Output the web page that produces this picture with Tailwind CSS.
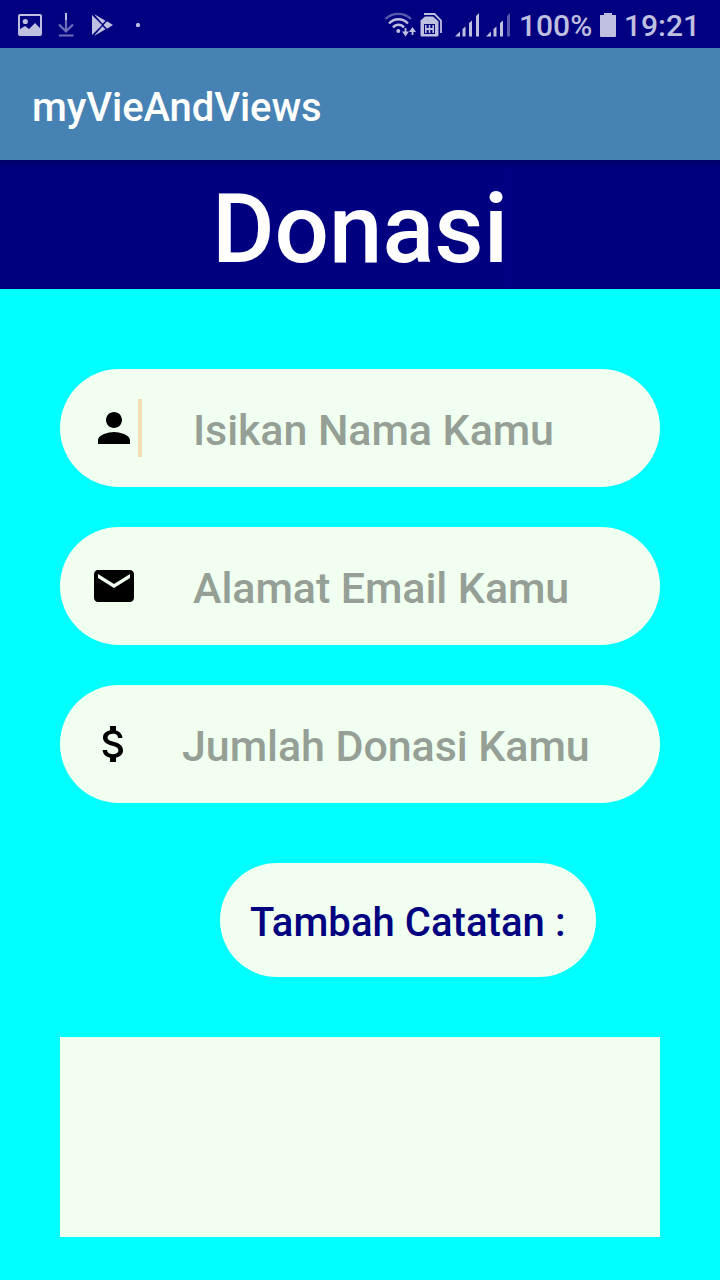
<!DOCTYPE html>
<html lang="id">
<head>
<meta charset="utf-8">
<title>myVieAndViews</title>
<script src="https://cdn.jsdelivr.net/npm/@tailwindcss/browser@4"></script>
</head>
<body class="w-[720px] h-[1280px] overflow-hidden bg-[#00ffff] font-['Roboto',sans-serif] font-medium flex flex-col">
  <!-- Status bar -->
  <header class="h-12 shrink-0 bg-[#000080] flex items-center justify-between text-[#bfbfdf]">
    <svg class="w-[160px] h-12" viewBox="0 0 160 48" fill="currentColor">
      <path fill-rule="evenodd" d="M20 14h20a2 2 0 0 1 2 2v18a2 2 0 0 1-2 2H20a2 2 0 0 1-2-2V16a2 2 0 0 1 2-2zM20 16v13l5-3 4 3 6-6 5 5V16z"/>
      <circle cx="25.300" cy="21.500" r="2.600"/>
      <path d="M66 20V32M59 24.500l7 7 7-7M59 35.500h14.500" fill="none" stroke="#6f6fb9" stroke-width="2.200"/>
      <path d="M65 13h2v7h-2z"/>
      <path d="M92 15v20l10-10zM94 14l8.500 9.700 3-3zM94 36l8.500-9.700 3 3zM103.500 25l3.500-3.700 6 3.700-6 3.700z"/>
      <rect x="136" y="23" width="4" height="4" rx="1.500"/>
    </svg>
    <div class="flex h-12 items-center">
      <svg class="w-[135px] h-12" viewBox="380 0 135 48" fill="currentColor">
        <g fill="none" stroke="currentColor" stroke-width="2.400">
          <path d="M385.500 19C392.500 12.200 404 12.200 411 19" stroke="#5858ad"/>
          <path d="M389 23.500C394 17.800 403 17.800 408 23.500"/>
          <path d="M393 27.500C396 23.800 401 23.800 404 27.500"/>
          <path d="M405.500 28v6M412.500 35v-6M424 14h10.500L441 20.500V33" stroke-width="1.800"/>
        </g>
        <path d="M402 31.500h7l-3.500 5zM409 32h7l-3.500-5z"/>
        <circle cx="398.300" cy="31" r="2"/>
        <path d="M425 16.500h8l5.500 5V35a1.500 1.500 0 0 1-1.500 1.500h-15A1.500 1.500 0 0 1 420.500 35V20.500z"/>
        <path d="M424 24h11v10h-11z" fill="#000080"/>
        <path d="M425 25h1.600v3h2.100v-3h1.600v3h2.100v-3h1.600v8h-1.600v-3h-2.100v3h-1.600v-3h-2.100v3H425z"/>
        <path d="M455 36.500l5-5v5zM462.500 29l3-2.500v10h-3zM469 23l3-2.500v16h-3zM476 16l3-3v23.500h-3zM486 36.500l5-5v5zM493.500 29l3-2.500v10h-3zM500 23l3-2.500v16h-3z"/>
        <path d="M507 16l3-3v23.500h-3z" fill="#5858ad"/>
      </svg>
      <span class="w-[85px] pl-1 text-[30px] leading-[30px] whitespace-nowrap pt-[3px]">100%</span>
      <svg class="w-[16px] h-12" viewBox="0 0 16 48" fill="currentColor"><path d="M4 13h8v2h3.500a.5.500 0 0 1 .5.500V36a1 1 0 0 1-1 1H1a1 1 0 0 1-1-1V15.500A.5.500 0 0 1 .5 15H4z"/></svg>
      <span class="w-[104px] pl-2 text-[30px] leading-[30px] whitespace-nowrap pt-[3px]">19:21</span>
    </div>
  </header>

  <!-- App bar -->
  <div class="h-28 shrink-0 bg-[#4682b4] text-white text-[40px] leading-[47px] tracking-[-0.08px] px-8 flex items-center pt-1.5">myVieAndViews</div>

  <h1 class="h-[129px] shrink-0 bg-[#000080] bg-linear-to-b from-[#000068] via-[#000080] via-[8px] to-[#000080] text-white text-[96px] leading-[129px] font-medium text-center pt-[5px]">Donasi</h1>

  <main class="px-[60px] pt-20">
    <div class="flex flex-col gap-10 text-[43px] leading-[58px] tracking-[-0.08px] text-[#959f95]">
      <label class="h-[118px] rounded-full bg-[#f0fff0] pl-[30px] flex items-center whitespace-nowrap">
        <svg class="w-12 h-12 shrink-0" viewBox="0 0 24 24" fill="#000"><path d="M12 12c2.210 0 4-1.790 4-4s-1.790-4-4-4-4 1.790-4 4 1.790 4 4 4zm0 2c-2.670 0-8 1.340-8 4v2h16v-2c0-2.660-5.330-4-8-4z"/></svg>
        <span class="w-1 h-[58px] bg-[#f5deb3] shrink-0"></span>
        <span class="pl-[51px] pt-1">Isikan Nama Kamu</span>
      </label>
      <label class="h-[118px] rounded-full bg-[#f0fff0] pl-[30px] flex items-center whitespace-nowrap">
        <svg class="w-12 h-12 shrink-0" viewBox="0 0 24 24" fill="#000"><path d="M20 4H4c-1.100 0-1.990.900-1.990 2L2 18c0 1.100.900 2 2 2h16c1.100 0 2-.900 2-2V6c0-1.100-.900-2-2-2zm0 4l-8 5-8-5V6l8 5 8-5v2z"/></svg>
        <span class="pl-[55px] pt-1">Alamat Email Kamu</span>
      </label>
      <label class="h-[118px] rounded-full bg-[#f0fff0] pl-[30px] flex items-center whitespace-nowrap">
        <svg class="w-12 h-12 shrink-0" viewBox="0 0 24 24" fill="#000"><path d="M11.800 10.900c-2.270-.590-3-1.200-3-2.150 0-1.090 1.010-1.850 2.700-1.850 1.780 0 2.440.850 2.500 2.100h2.210c-.070-1.720-1.120-3.300-3.210-3.810V3h-3v2.160c-1.940.420-3.500 1.680-3.500 3.610 0 2.310 1.910 3.460 4.700 4.130 2.500.600 3 1.480 3 2.410 0 .690-.490 1.790-2.700 1.790-2.060 0-2.870-.920-2.980-2.100h-2.200c.120 2.190 1.760 3.420 3.680 3.830V21h3v-2.150c1.950-.370 3.500-1.500 3.500-3.550 0-2.840-2.430-3.810-4.700-4.400z"/></svg>
        <span class="pl-[44px] pt-1">Jumlah Donasi Kamu</span>
      </label>
    </div>
    <div class="mt-[60px] ml-[160px] w-[376px] h-[114px] rounded-full bg-[#f0fff0] text-[#000080] text-[40px] leading-[54px] tracking-[0.06px] flex items-center pl-[30px] pt-1.5 whitespace-nowrap">Tambah Catatan :</div>
    <div class="mt-[60px] h-[200px] bg-[#f0fff0]"></div>
  </main>
</body>
</html>
